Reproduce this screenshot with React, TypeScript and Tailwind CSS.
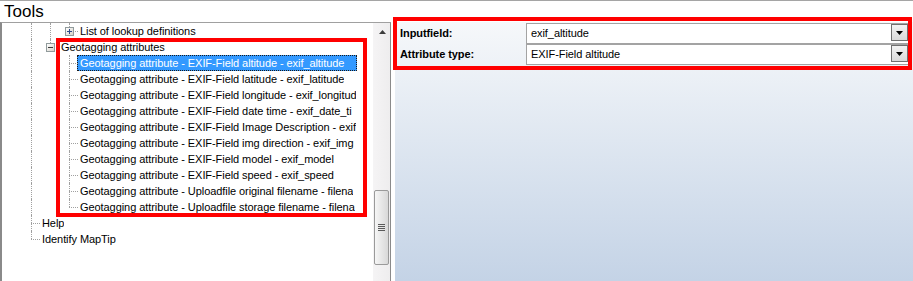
import React from "react";

type Anc = "none" | "full";
interface Row {
  text: string;
  anc: Anc[];
  own: "last" | "mid";
  box?: "+" | "-";
  selected?: boolean;
}

const childTexts = [
  "Geotagging attribute - EXIF-Field altitude - exif_altitude",
  "Geotagging attribute - EXIF-Field latitude - exif_latitude",
  "Geotagging attribute - EXIF-Field longitude - exif_longitud",
  "Geotagging attribute - EXIF-Field date time - exif_date_ti",
  "Geotagging attribute - EXIF-Field Image Description - exif",
  "Geotagging attribute - EXIF-Field img direction - exif_img",
  "Geotagging attribute - EXIF-Field model - exif_model",
  "Geotagging attribute - EXIF-Field speed - exif_speed",
  "Geotagging attribute - Uploadfile original filename - filena",
  "Geotagging attribute - Uploadfile storage filename - filena",
];

const rows: Row[] = [
  { text: "List of lookup definitions", anc: ["full", "full"], own: "last", box: "+" },
  { text: "Geotagging attributes", anc: ["full"], own: "last", box: "-" },
  ...childTexts.map(
    (t, i): Row => ({
      text: t,
      anc: ["full", "none"],
      own: i === childTexts.length - 1 ? "last" : "mid",
      selected: i === 0,
    })
  ),
  { text: "Help", anc: [], own: "mid" },
  { text: "Identify MapTip", anc: [], own: "last" },
];

function AncCell({ kind }: { kind: Anc }) {
  return (
    <div className="relative w-[19px] h-[16px] shrink-0">
      {kind === "full" && (
        <div className="absolute left-[10px] top-0 h-[16px] w-0 border-l border-dotted border-[#a0a0a0]" />
      )}
    </div>
  );
}

function OwnCell({ own, box }: { own: "last" | "mid"; box?: "+" | "-" }) {
  return (
    <div className="relative w-[19px] h-[16px] shrink-0">
      <div
        className={
          own === "mid"
            ? "absolute left-[10px] top-0 h-[16px] w-0 border-l border-dotted border-[#a0a0a0]"
            : "absolute left-[10px] top-0 h-[8px] w-0 border-l border-dotted border-[#a0a0a0]"
        }
      />
      <div className="absolute left-[10px] top-[8px] w-[9px] h-0 border-t border-dotted border-[#a0a0a0]" />
      {box && (
        <div className="absolute left-[6px] top-[4px] w-[9px] h-[9px] border border-[#919b9c] bg-linear-to-br from-white to-[#d6d2ca]">
          <div
            className={
              box === "+"
                ? "absolute left-[1px] top-[3px] w-[5px] h-[1px] bg-[#2d4a8a]"
                : "absolute left-[1px] top-[3px] w-[5px] h-[1px] bg-[#3a3a3a]"
            }
          />
          {box === "+" && <div className="absolute left-[3px] top-[1px] w-[1px] h-[5px] bg-[#2d4a8a]" />}
        </div>
      )}
    </div>
  );
}

function TreeRow({ row }: { row: Row }) {
  return (
    <div className="flex h-[16px] pl-[19px]">
      {row.anc.map((a, i) => (
        <AncCell key={i} kind={a} />
      ))}
      <OwnCell own={row.own} box={row.box} />
      <div
        className={
          row.selected
            ? "-ml-[1px] h-[16px] w-[280px] overflow-hidden whitespace-nowrap border border-dotted border-[#1a1a1a] bg-[#3399ff] pl-[2px] leading-[14px] text-white"
            : "-ml-[1px] h-[16px] max-w-[280px] overflow-hidden whitespace-nowrap border border-transparent pl-[2px] leading-[14px] text-black"
        }
      >
        {row.text}
      </div>
    </div>
  );
}

function Combo({ value }: { value: string }) {
  return (
    <div className="relative h-[21px] bg-white border-t border-l border-b border-[#a3a3a3] flex items-center pl-[4px] text-[11px] text-black whitespace-nowrap">
      {value}
      <div className="absolute right-0 top-0 w-[17px] h-[17px] border border-[#707070] bg-linear-to-b from-[#f3f3f3] to-[#d9d9d9] flex items-center justify-center">
        <svg width="7" height="4" viewBox="0 0 7 4">
          <polygon points="0,0 7,0 3.5,4" fill="#000" />
        </svg>
      </div>
    </div>
  );
}

export default function App() {
  return (
    <div className="relative w-[913px] h-[281px] overflow-hidden bg-white font-['Liberation_Sans',Arial,sans-serif] text-[11px] tracking-[-0.07px]">
      <div className="h-[22px] border-t border-[#a5a5a5] pl-[4px] text-[17px] leading-[21px] tracking-normal text-black">
        Tools
      </div>
      <div className="flex h-[259px]">
        <div className="w-[391px] h-full flex border-t border-l-2 border-r border-t-[#a0a0a0] border-l-[#8a8a8a] border-r-[#8a8a8a]">
          <div className="flex-1 h-full bg-white overflow-hidden">
            {rows.map((r, i) => (
              <TreeRow key={i} row={r} />
            ))}
          </div>
          <div className="w-[17px] h-full bg-linear-to-r from-[#f5f4f5] to-[#eeedee] flex flex-col items-center">
            <div className="h-[17px] w-full flex items-center justify-center pl-[1px]">
              <svg width="7" height="4" viewBox="0 0 7 4">
                <polygon points="3.5,0 7,4 0,4" fill="#3c3c3c" />
              </svg>
            </div>
            <div className="mt-[150px] w-[15px] h-[75px] rounded-[2px] border border-[#9a9a9a] bg-linear-to-r from-[#f6f6f6] to-[#d8d8d8] flex flex-col items-center justify-center gap-[1px]">
              <div className="w-[7px] h-[1px] bg-[#5a5a5a]" />
              <div className="w-[7px] h-[1px] bg-[#5a5a5a]" />
              <div className="w-[7px] h-[1px] bg-[#5a5a5a]" />
              <div className="w-[7px] h-[1px] bg-[#5a5a5a]" />
            </div>
          </div>
        </div>
        <div className="flex-1 h-full bg-white pl-[4px]">
          <div className="h-full bg-linear-to-b from-[#f6f8fa] to-[#c4d3e6] pt-[1px] pr-[5px]">
            <div className="grid grid-cols-[131px_1fr]">
              <div className="h-[21px] pl-[5px] flex items-center font-bold text-black">Inputfield:</div>
              <Combo value="exif_altitude" />
              <div className="h-[21px] pl-[5px] flex items-center font-bold text-black">Attribute type:</div>
              <Combo value="EXIF-Field altitude" />
            </div>
          </div>
        </div>
      </div>
      <div className="absolute left-[56px] top-[38px] w-[311px] h-[179px] border-4 border-[#ff0000]" />
      <div className="absolute left-[393px] top-[17px] w-[519px] h-[53px] border-4 border-[#ff0000]" />
    </div>
  );
}
